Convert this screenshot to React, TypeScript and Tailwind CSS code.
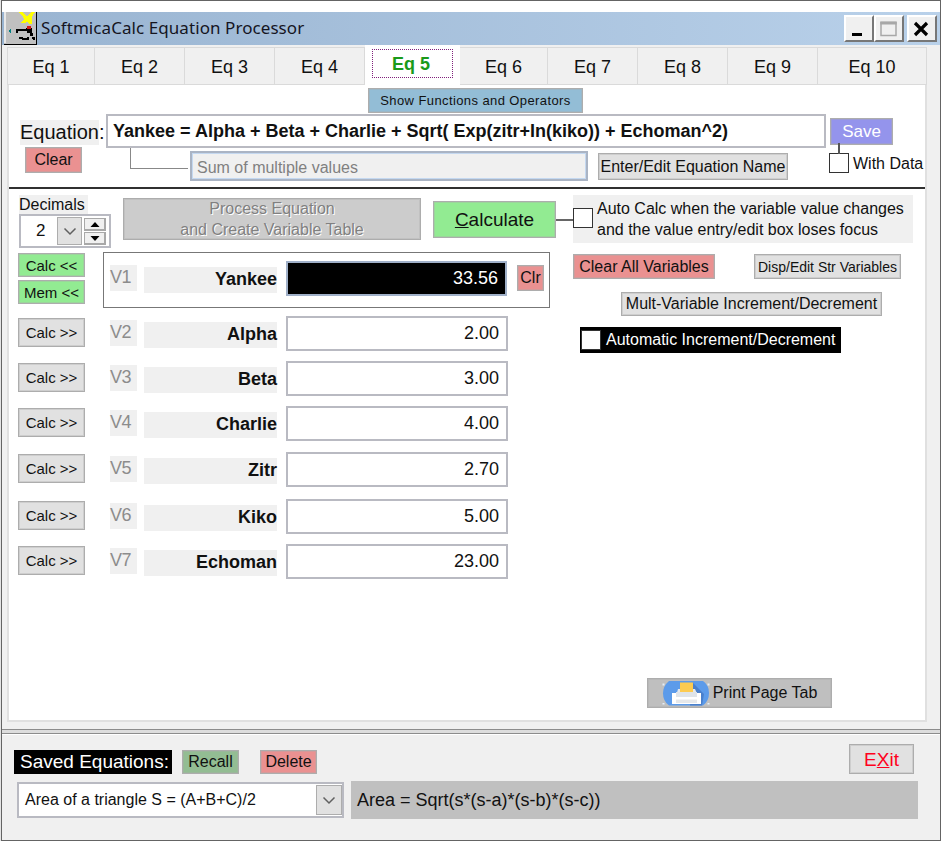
import { useState, type ReactNode } from "react";
import clsx from "clsx";

type Variable = {
  id: string;
  name: string;
  value: string;
  gap: string;
};

const TABS = [
  { label: "Eq 1", width: "w-[88px]" },
  { label: "Eq 2", width: "w-[90px]" },
  { label: "Eq 3", width: "w-[90px]" },
  { label: "Eq 4", width: "w-[90px]" },
  { label: "Eq 5", width: "w-[95px]" },
  { label: "Eq 6", width: "w-[88px]" },
  { label: "Eq 7", width: "w-[90px]" },
  { label: "Eq 8", width: "w-[90px]" },
  { label: "Eq 9", width: "w-[90px]" },
  { label: "Eq 10", width: "w-[109px]" },
];

const VARIABLES: Variable[] = [
  { id: "V2", name: "Alpha", value: "2.00", gap: "mt-[8px]" },
  { id: "V3", name: "Beta", value: "3.00", gap: "mt-[11px]" },
  { id: "V4", name: "Charlie", value: "4.00", gap: "mt-[11px]" },
  { id: "V5", name: "Zitr", value: "2.70", gap: "mt-[12px]" },
  { id: "V6", name: "Kiko", value: "5.00", gap: "mt-[13px]" },
  { id: "V7", name: "Echoman", value: "23.00", gap: "mt-[11px]" },
];

function Button({ className, children }: { className?: string; children: ReactNode }) {
  return (
    <button
      type="button"
      className={clsx(
        "flex shrink-0 items-center justify-center whitespace-nowrap border border-[#adadad] leading-none shadow-[inset_0_0_0_1px_rgba(173,173,173,0.35)]",
        className
      )}
    >
      {children}
    </button>
  );
}

function Checkbox({ className }: { className?: string }) {
  return <span className={clsx("block size-[20px] shrink-0 border-[1.5px] border-[#333] bg-white", className)} />;
}

function AppIcon() {
  return (
    <svg width="33" height="33" viewBox="0 0 33 33" className="shrink-0" shapeRendering="crispEdges">
      <rect width="33" height="33" fill="#000" />
      <rect width="32" height="31.5" fill="#c0c0c0" />
      <path d="M0 0h1.5v31H0z" fill="#e8e8e8" />
      <path d="M14 0h4l5 4 5-4h3l-3 5v7h-3l-2-3-2 2h-4l3-4-1-3z" fill="#ff0" />
      <path d="M7 17l-3 2 3 2z" fill="#008080" />
      <path d="M12 17h16v2H14v2h-2z" fill="#000" />
      <path d="M22 16h6v5h-5zM26 21h3v3h-3zM28 25h3v3h-2zM15 25h4v2h-4zM18 26h7v2h-7zM23 25h2v1h-2z" fill="#000" />
      <path d="M23 14h4v3h-4z" fill="#d01818" />
    </svg>
  );
}

function PrinterIcon() {
  return (
    <svg width="48" height="25" viewBox="0 0 48 25" className="shrink-0">
      <path d="M7 0h34q6 4 6 12t-6 12.500H7Q1 20 1 12.500T7 0z" fill="#5c9bea" />
      <path d="M30 1l12 12-2 11.500H28z" fill="#4a80cc" />
      <path d="M1.500 4.500V2M1.500 22v1.500M46.500 4.500V2M46.500 22v1.500" stroke="#e4edf8" strokeWidth="2" strokeDasharray="2 1" />
      <path d="M18 1.500h13v11H18z" fill="#fdcb50" />
      <path d="M16 8h2v3h13V8h2l3 7H14z" fill="#e5e9ed" />
      <path d="M10 12h4v3h21v-3h4v11H10z" fill="#fff" />
      <path d="M14 11h21v5H14z" fill="#dfe4e9" />
      <path d="M14 18.500h21v3.500H14z" fill="#e6e8ea" />
    </svg>
  );
}

function Chevron() {
  return (
    <svg width="14" height="9" viewBox="0 0 14 9">
      <path d="M1.500 1.500L7 7l5.500-5.500" fill="none" stroke="#606060" strokeWidth="1.5" />
    </svg>
  );
}

function TitleBar() {
  const box =
    "flex h-[27px] w-[30px] border-2 border-t-white border-l-white border-r-[#777] border-b-[#777] bg-[#f0f0f0]";

  return (
    <header className="flex h-[33px] bg-gradient-to-r from-[#99b4d1] to-[#b9d1ea] pl-[2px]">
      <AppIcon />
      <h1 className="ml-[4px] pt-[4px] font-['Noto_Sans'] text-[17px] leading-[24px] tracking-[0.07px] text-[#15151f]">
        SoftmicaCalc Equation Processor
      </h1>
      <div className="ml-auto mr-[3px] flex pt-[3px]">
        <span className={box}>
          <svg width="26" height="23">
            <path d="M6 16h10v3H6z" fill="#000" />
          </svg>
        </span>
        <span className={box}>
          <svg width="26" height="23">
            <path d="M5 5.500h15v13H5z" fill="none" stroke="#a8a8a8" strokeWidth="1.500" />
            <path d="M4.300 4.500h16.400v3H4.300z" fill="#a8a8a8" />
          </svg>
        </span>
        <span className={clsx(box, "ml-[3px]")}>
          <svg width="26" height="23">
            <path d="M6 6l12 12M18 6L6 18" stroke="#000" strokeWidth="3.200" />
          </svg>
        </span>
      </div>
    </header>
  );
}

function VariableCells({ id, name, children }: { id: string; name: string; children: ReactNode }) {
  return (
    <>
      <span className="mt-[4px] h-[26px] w-[27px] bg-[#f0f0f0] text-[18px] leading-[24px] tracking-[-0.6px] text-[#8c8c8c]">
        {id}
      </span>
      <span className="ml-[7px] mt-[6px] h-[26px] w-[133px] bg-[#f0f0f0] text-right text-[18px] font-bold leading-[24px]">
        {name}
      </span>
      {children}
    </>
  );
}

export default function App() {
  const [active, setActive] = useState("Eq 5");

  return (
    <div className="h-[841px] w-[941px] overflow-hidden bg-[#e4e4e4] pl-px font-['Liberation_Sans',Arial,sans-serif] text-[#111]">
      <div className="flex h-full flex-col border border-[#646464] bg-[#f0f0f0]">
        <div className="h-[11px] shrink-0 bg-white" />
        <TitleBar />

        <main className="ml-[5px] h-[677px] w-[920px] shrink-0">
          <nav className="flex h-[40px] items-end">
            {TABS.map((tab) =>
              tab.label === active ? (
                <button key={tab.label} type="button" className={clsx("h-[40px] bg-white px-[7px] pb-[7px] pt-[4px]", tab.width)}>
                  <span className="flex h-[29px] items-center justify-center border-[1.5px] border-dotted border-[#80207c] pr-[3px] text-[18px] font-bold leading-none text-[#1a9a1a]">
                    {tab.label}
                  </span>
                </button>
              ) : (
                <button
                  key={tab.label}
                  type="button"
                  onClick={() => setActive(tab.label)}
                  className={clsx(
                    "h-[38px] border border-l-0 border-[#dadada] pt-[2px] text-[18px] leading-none first:border-l",
                    tab.width
                  )}
                >
                  {tab.label}
                </button>
              )
            )}
          </nav>

          <div className="flex h-[637px] flex-col border-2 border-t-0 border-[#e0e0e0] bg-white">
            {/* equation entry */}
            <section className="h-[104px] shrink-0 border-b-2 border-[#303030]">
              <div className="flex pl-[359px] pt-[3px]">
                <Button className="h-[25px] w-[215px] bg-[#93bdd6] text-[13px] tracking-[0.4px]">
                  Show Functions and Operators
                </Button>
              </div>

              <div className="flex">
                <div className="ml-[11px] flex w-[86px] flex-col pt-[7px]">
                  <span className="h-[25px] w-[79px] bg-[#f0f0f0] text-[20px] leading-[24px]">Equation:</span>
                  <Button className="ml-[5px] mt-[2px] h-[26px] w-[57px] bg-[#ea9191] text-[16px]">Clear</Button>
                </div>

                <div className="w-[720px] pt-px">
                  <div className="h-[34px] border-2 border-[#b9bac2] bg-white pl-[5px] text-[18px] font-bold leading-[31px] whitespace-nowrap">
                    Yankee = Alpha + Beta + Charlie + Sqrt( Exp(zitr+In(kiko)) + Echoman^2)
                  </div>
                  <div className="flex items-start">
                    <span className="ml-[24px] h-[21px] w-[58px] border-b-[1.5px] border-l-[1.5px] border-[#888]" />
                    <div className="ml-[2px] mt-[3px] h-[30px] w-[398px] border-2 border-[#aab4c4] bg-[#f0f0f0] pl-[5px] text-[16px] leading-[30px] text-[#808080] shadow-[inset_0_0_0_1px_#c4d8f0]">
                      Sum of multiple values
                    </div>
                    <Button className="ml-[10px] mt-[5px] h-[27px] w-[190px] bg-[#e1e1e1] text-[16px]">
                      Enter/Edit Equation Name
                    </Button>
                  </div>
                </div>

                <div className="pl-[3px] pt-[5px]">
                  <Button className="ml-px h-[27px] w-[63px] bg-[#9494ec] text-[17px] text-white">Save</Button>
                  <div className="relative flex pt-[8px]">
                    <span className="absolute left-[9px] top-[-2px] h-[11px] w-[1.5px] bg-[#555]" />
                    <Checkbox />
                    <span className="ml-[4px] whitespace-nowrap text-[16px] leading-[22px]">With Data</span>
                  </div>
                </div>
              </div>
            </section>

            {/* toolbar */}
            <section className="flex h-[63px] shrink-0 pl-[10px]">
              <div className="w-[104px] pt-[6px]">
                <div className="h-[19px] w-[69px] bg-[#f0f0f0] text-[16px] leading-[19px]">Decimals</div>
                <div className="flex h-[34px] w-[92px] items-center border-2 border-[#b9bac2] bg-white">
                  <span className="w-[36px] pl-[15px] text-[17px]">2</span>
                  <span className="flex h-[28px] w-[25px] items-center justify-center border border-[#adadad] bg-[#e1e1e1]">
                    <Chevron />
                  </span>
                  <span className="ml-[2px] flex h-[27px] w-[22px] flex-col gap-px">
                    {["M11 4l4.500 5h-9z", "M11 9l4.500-5h-9z"].map((d) => (
                      <span key={d} className="h-[13px] border border-b-2 border-r-2 border-[#a8a8a8] bg-[#f0f0f0]">
                        <svg width="20" height="11">
                          <path d={d} transform="translate(-1 -1)" fill="#000" />
                        </svg>
                      </span>
                    ))}
                  </span>
                </div>
              </div>

              <Button className="mt-[9px] h-[42px] w-[298px] bg-[#cccccc] text-[16px] text-[#808080] [text-shadow:1px_1px_0_#fff]">
                <span className="leading-[21px]">
                  Process Equation
                  <br />
                  and Create Variable Table
                </span>
              </Button>

              <Button className="ml-[12px] mt-[12px] h-[37px] w-[123px] bg-[#92eb92] text-[19px]">
                <span>
                  <u>C</u>alculate
                </span>
              </Button>
              <span className="mt-[30px] h-[1.5px] w-[17px] bg-[#666]" />

              <div className="mt-[6px] flex h-[48px] w-[340px] bg-[#f0f0f0]">
                <Checkbox className="mt-[13px]" />
                <p className="ml-[4px] whitespace-nowrap text-[16px] leading-[21px] pt-[3px]">
                  Auto Calc when the variable value changes
                  <br />
                  and the value entry/edit box loses focus
                </p>
              </div>
            </section>

            {/* variable table and actions */}
            <div className="flex">
              <section className="w-[565px] pl-[9px]">
                <div className="flex">
                  <div className="mr-[18px] flex flex-col gap-[3px] pt-[1px]">
                    <Button className="h-[24px] w-[67px] bg-[#92eb92] text-[15px]">Calc &lt;&lt;</Button>
                    <Button className="h-[24px] w-[67px] bg-[#92eb92] text-[15px]">Mem &lt;&lt;</Button>
                  </div>
                  <div className="flex h-[56px] w-[447px] border-[1.5px] border-[#777] pl-[6px] pt-[8px]">
                    <VariableCells id="V1" name="Yankee">
                      <div className="ml-[9px] h-[35px] w-[221px] border-2 border-[#a0b0c8] bg-black pr-[7px] text-right text-[18px] leading-[31px] text-white">
                        33.56
                      </div>
                      <Button className="ml-[10px] mt-[4px] h-[26px] w-[27px] bg-[#ea9191] text-[16px]">Clr</Button>
                    </VariableCells>
                  </div>
                </div>

                {VARIABLES.map((v) => (
                  <div key={v.id} className={clsx("flex h-[34px] items-start", v.gap)}>
                    <Button className="mr-[25px] mt-[2px] h-[29px] w-[67px] bg-[#e1e1e1] text-[15px]">Calc &gt;&gt;</Button>
                    <VariableCells id={v.id} name={v.name}>
                      <div className="ml-[9px] h-[35px] w-[222px] border-2 border-[#b9bac2] bg-white pr-[7px] text-right text-[18px] leading-[31px]">
                        {v.value}
                      </div>
                    </VariableCells>
                  </div>
                ))}
              </section>

              <section className="flex h-[456px] w-[340px] flex-col pt-[2px]">
                <div className="-ml-px flex justify-between pr-[13px]">
                  <Button className="h-[25px] w-[142px] bg-[#ea9191] text-[16px]">Clear All Variables</Button>
                  <Button className="h-[25px] w-[147px] bg-[#e1e1e1] text-[14px]">Disp/Edit Str Variables</Button>
                </div>
                <Button className="ml-[47px] mt-[13px] h-[24px] w-[261px] bg-[#e1e1e1] text-[16px]">
                  Mult-Variable Increment/Decrement
                </Button>
                <div className="ml-[6px] mt-[11px] flex h-[26px] w-[261px] items-center bg-black pl-px text-[16px] text-white">
                  <Checkbox className="size-[18px]" />
                  <span className="ml-[5px] whitespace-nowrap leading-[24px]">Automatic Increment/Decrement</span>
                </div>
                <Button className="mb-0 ml-[73px] mt-auto h-[30px] w-[185px] bg-[#bfbfbf] text-[16px]">
                  <PrinterIcon />
                  <span className="ml-[3px]">Print Page Tab</span>
                </Button>
              </section>
            </div>
          </div>
        </main>

        <div className="mt-[7px] h-[5px] shrink-0 border-y-[1.5px] border-[#8c8c8c] bg-[#ddd]" />
        <footer className="h-[106px] border-t border-white">
          <div className="flex pl-[12px] pt-[9px]">
            <span className="mt-[6px] h-[24px] w-[158px] bg-black pl-[6px] text-[19px] leading-[23px] text-white">
              Saved Equations:
            </span>
            <Button className="ml-[10px] mt-[6px] h-[24px] w-[57px] bg-[#93bd93] text-[16px]">Recall</Button>
            <Button className="ml-[21px] mt-[6px] h-[24px] w-[57px] bg-[#ea9191] text-[16px]">Delete</Button>
            <Button className="ml-auto mr-[26px] h-[30px] w-[65px] bg-[#e1e1e1] text-[19px] text-[#ff0020]">
              <span>
                E<u>X</u>it
              </span>
            </Button>
          </div>
          <div className="flex pl-[15px] pt-[7px]">
            <div className="mt-px flex h-[36px] w-[327px] items-center justify-between border-2 border-[#b9bac2] bg-white pl-[6px]">
              <span className="text-[16px]">Area of a triangle S = (A+B+C)/2</span>
              <span className="flex h-[30px] w-[26px] items-center justify-center border border-[#adadad] bg-[#e1e1e1]">
                <Chevron />
              </span>
            </div>
            <div className="ml-[7px] h-[38px] w-[567px] bg-[#c0c0c0] pl-[6px] text-[18px] leading-[38px]">
              Area = Sqrt(s*(s-a)*(s-b)*(s-c))
            </div>
          </div>
        </footer>
      </div>
    </div>
  );
}
